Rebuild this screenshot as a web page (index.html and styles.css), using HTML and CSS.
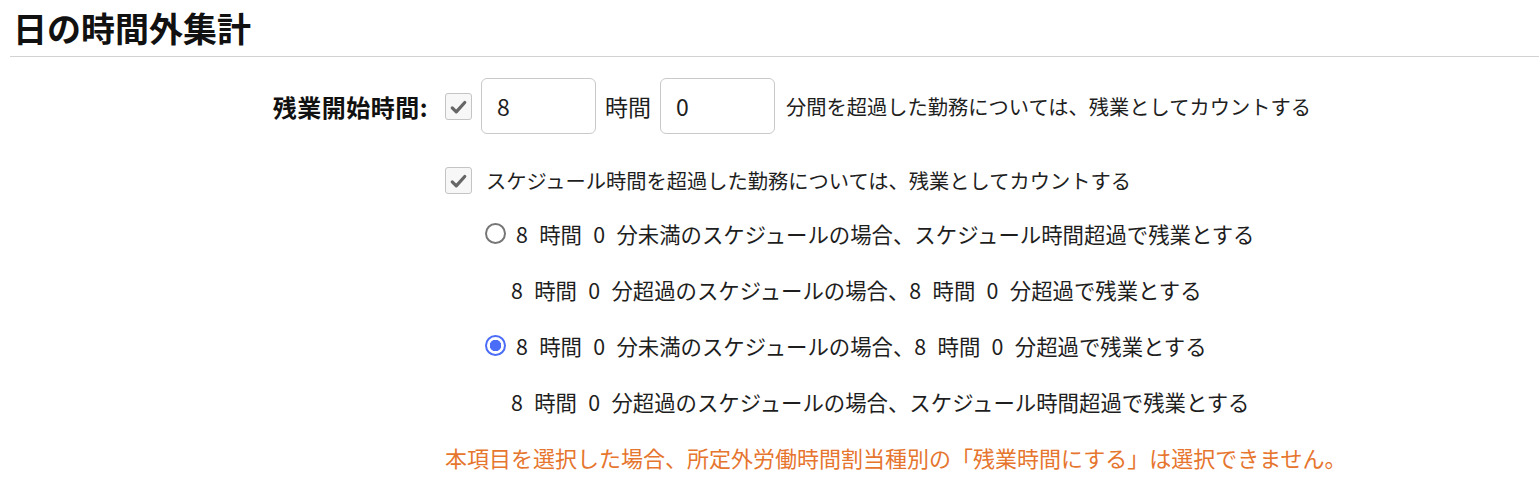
FILE: index.html
```html
<!DOCTYPE html>
<html lang="ja">
<head>
<meta charset="utf-8">
<link rel="stylesheet" href="styles.css">
</head>
<body>
<div class="page">
  <h1 class="title">日の時間外集計</h1>
  <div class="form">
    <div class="label">残業開始時間:</div>
    <div class="row row-first">
      <span class="check"><svg viewBox="0 0 28 28" width="27" height="27"><path d="M7 15.5 L11.5 20 L21 9.5" fill="none" stroke="#666" stroke-width="3.6" stroke-linecap="round" stroke-linejoin="round"/></svg></span>
      <input class="num" type="text" value="8">
      <span class="unit">時間</span>
      <input class="num" type="text" value="0">
      <span class="after">分間を超過した勤務については、残業としてカウントする</span>
    </div>
    <div class="row row-second">
      <span class="check"><svg viewBox="0 0 28 28" width="27" height="27"><path d="M7 15.5 L11.5 20 L21 9.5" fill="none" stroke="#666" stroke-width="3.6" stroke-linecap="round" stroke-linejoin="round"/></svg></span>
      <span class="after">スケジュール時間を超過した勤務については、残業としてカウントする</span>
    </div>
    <div class="row opt">
      <span class="radio"></span>
      <span class="txt">8 時間 0 分未満のスケジュールの場合、スケジュール時間超過で残業とする</span>
    </div>
    <div class="row sub">
      <span class="txt">8 時間 0 分超過のスケジュールの場合、8 時間 0 分超過で残業とする</span>
    </div>
    <div class="row opt">
      <span class="radio on"></span>
      <span class="txt">8 時間 0 分未満のスケジュールの場合、8 時間 0 分超過で残業とする</span>
    </div>
    <div class="row sub">
      <span class="txt">8 時間 0 分超過のスケジュールの場合、スケジュール時間超過で残業とする</span>
    </div>
    <div class="row note">
      <span>本項目を選択した場合、所定外労働時間割当種別の「残業時間にする」は選択できません。</span>
    </div>
  </div>
</div>
</body>
</html>
```

FILE: styles.css
```css
html, body {
  margin: 0;
  padding: 0;
  background: #ffffff;
}
body {
  font-family: "Noto Sans CJK JP", "Noto Sans", sans-serif;
  color: #1e1e1e;
  font-size: 20.25px;
}
.page {
  padding-left: 10px;
}
.title {
  margin: 0;
  padding: 8px 0 8px 3px;
  font-size: 34px;
  line-height: 40px;
  font-weight: 700;
  color: #111;
  border-bottom: 1px solid #d3d3d3;
}
.form {
  display: grid;
  grid-template-columns: 418px 1fr;
  column-gap: 17px;
  margin-top: 21px;
}
.label {
  font-weight: 700;
  font-size: 24px;
  letter-spacing: 0.5px;
  text-align: right;
  align-self: center;
  color: #111;
}
.row {
  grid-column: 2;
  display: flex;
  align-items: center;
  height: 56px;
  white-space: nowrap;
}
.row-first {
  gap: 9px;
}
.row-first .unit {
  font-size: 23px;
}
.row-first .after {
  margin-left: 2px;
}
.row-second {
  margin-top: 21px;
  height: 50px;
  gap: 14px;
}
.check {
  width: 27px;
  height: 27px;
  box-sizing: border-box;
  border: 1px solid #c4c4c4;
  border-radius: 3px;
  background: #f7f7f7;
  display: inline-flex;
  align-items: center;
  justify-content: center;
  flex: none;
}
.check svg {
  display: block;
}
.num {
  width: 115px;
  height: 56px;
  box-sizing: border-box;
  border: 1px solid #c9c9c9;
  border-radius: 6px;
  padding: 0 0 0 15px;
  font-family: "Noto Sans CJK JP", "Noto Sans", sans-serif;
  font-size: 23px;
  color: #1e1e1e;
  background: #fff;
  outline: none;
}
.txt {
  font-size: 21.4px;
  word-spacing: 6.5px;
}
.opt {
  padding-left: 40px;
  gap: 10px;
}
.sub {
  padding-left: 66px;
}
.radio {
  width: 21px;
  height: 21px;
  box-sizing: border-box;
  border: 2px solid #767676;
  border-radius: 50%;
  flex: none;
  background: #fff;
}
.radio.on {
  border: 2px solid #4a6cf7;
  background: radial-gradient(circle, #4a6cf7 0 5.5px, #fff 6px);
}
.note {
  color: #e6752e;
  font-size: 22px;
  padding-left: 0;
}
```
